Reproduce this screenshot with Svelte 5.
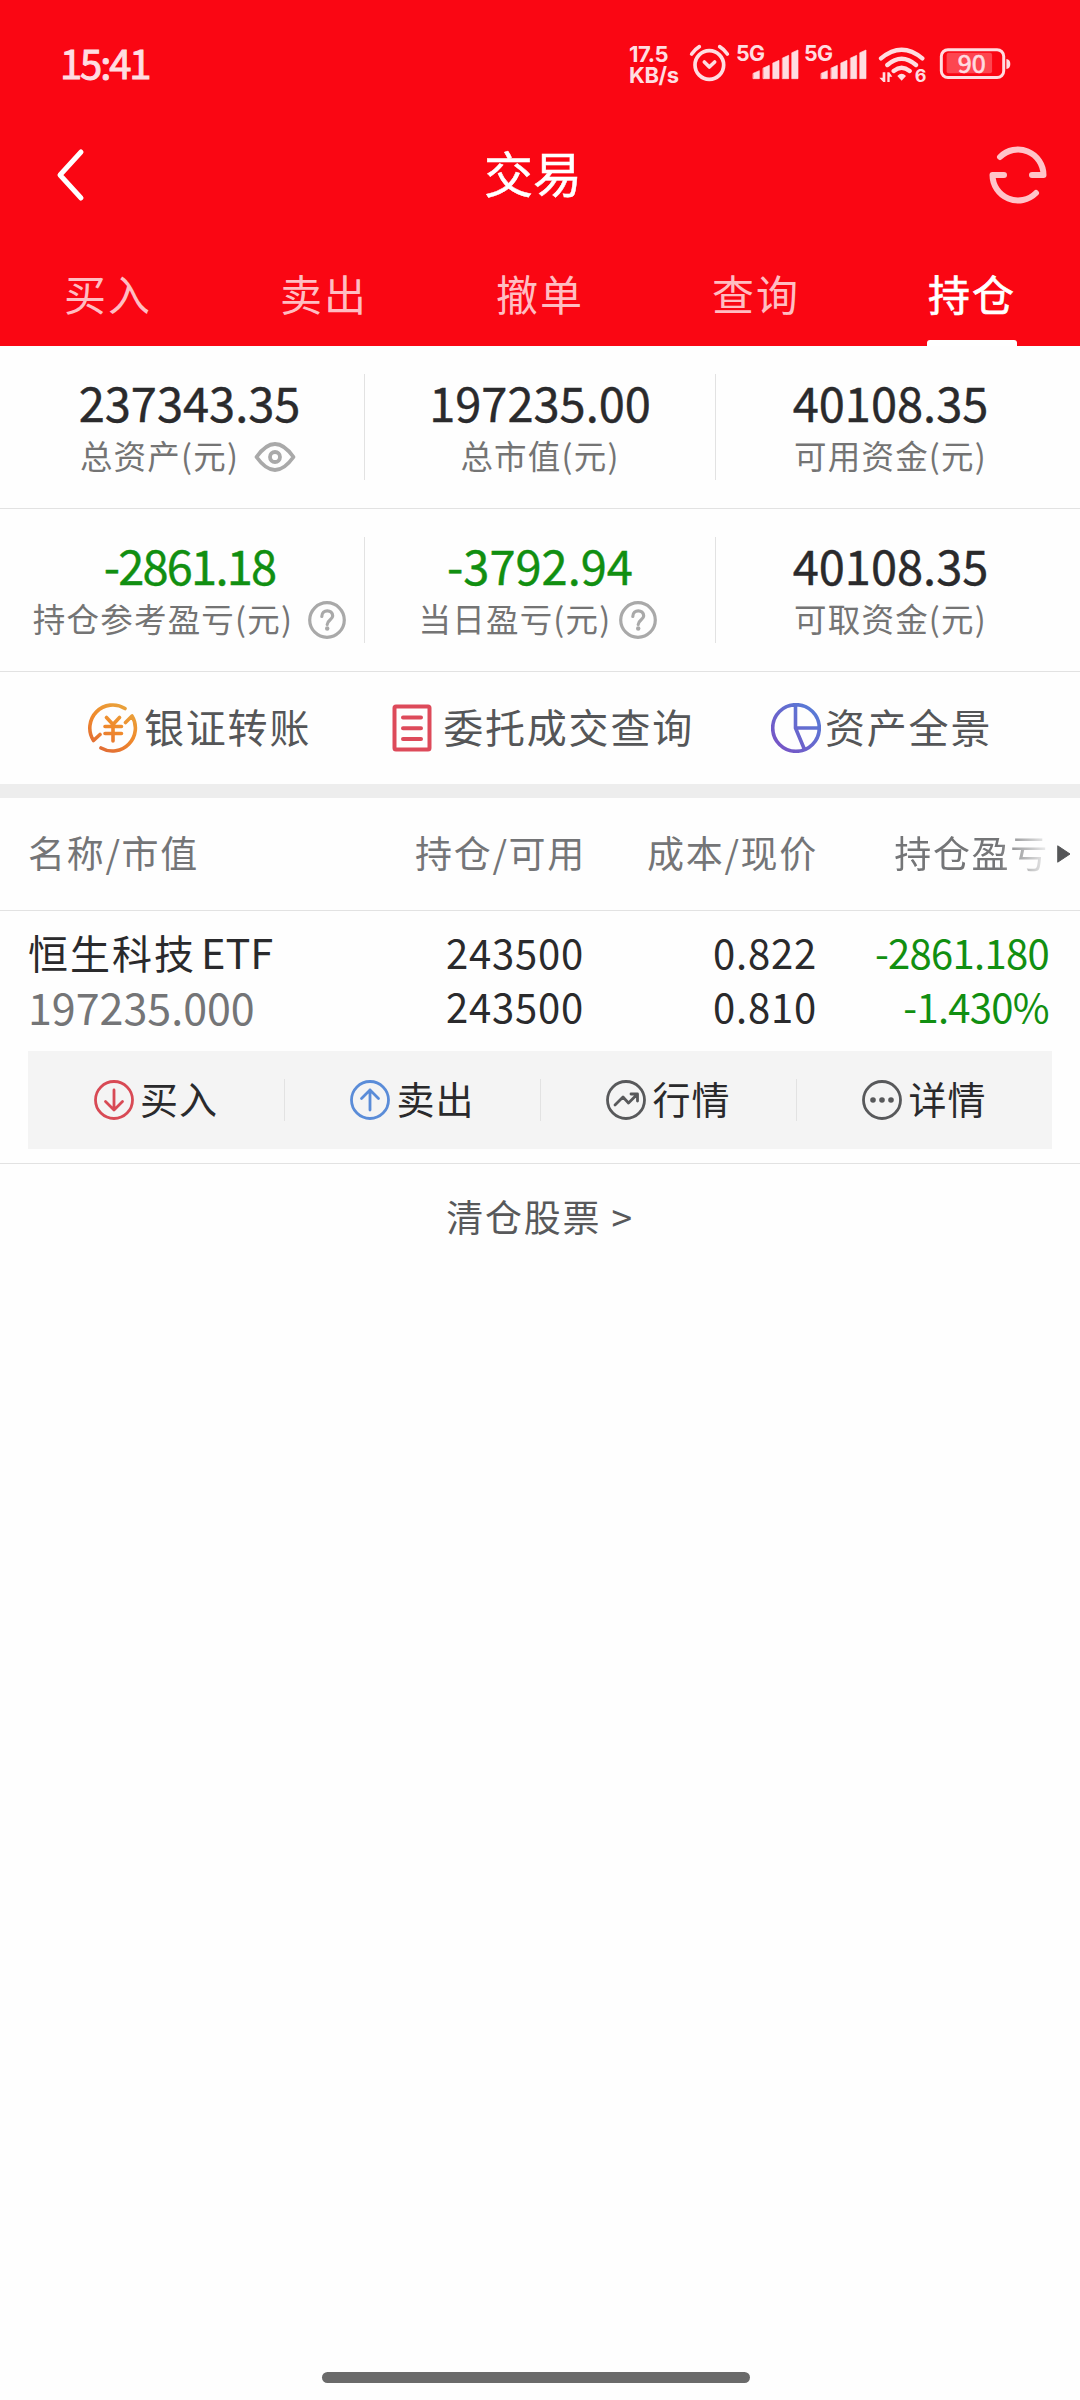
<script lang="ts">
  type Stat = {
    value: string;
    label: string;
    down?: boolean;
    narrow?: boolean;
    icon?: "eye" | "help";
    tight?: boolean;
  };

  const tabs = ["买入", "卖出", "撤单", "查询", "持仓"];
  let activeTab = $state("持仓");

  const stats: Stat[][] = [
    [
      { value: "237343.35", label: "总资产(元)", icon: "eye" },
      { value: "197235.00", label: "总市值(元)" },
      { value: "40108.35", label: "可用资金(元)" },
    ],
    [
      {
        value: "-2861.18",
        label: "持仓参考盈亏(元)",
        down: true,
        narrow: true,
        icon: "help",
      },
      {
        value: "-3792.94",
        label: "当日盈亏(元)",
        down: true,
        icon: "help",
        tight: true,
      },
      { value: "40108.35", label: "可取资金(元)" },
    ],
  ];

  const actions = [
    { id: "buy", label: "买入" },
    { id: "sell", label: "卖出" },
    { id: "quote", label: "行情" },
    { id: "detail", label: "详情" },
  ];

  const bars = [
    [460, 152],
    [490, 136],
    [519, 121],
    [548, 106],
    [576, 90],
  ];
</script>

{#snippet signal()}
  <svg class="signal" viewBox="405 45 195 180">
    <text x="408" y="124" class="net">5G</text>
    {#each bars as [x, y]}
      <path d={`M${x} ${y + 8}L${x + 18} ${y}V176H${x}Z`} />
    {/each}
  </svg>
{/snippet}

<div class="screen">
  <header>
    <div class="status">
      <span class="time">15:41</span>
      <span class="speed"><span>17.5</span><span>KB/s</span></span>
      <svg class="alarm" viewBox="264 45 129 180">
        <circle cx="328" cy="135" r="43" />
        <path d="M275 102Q286 87 298 80M382 102Q371 87 359 80M313 126L328 141L344 126" />
      </svg>
      {@render signal()}
      {@render signal()}
      <svg class="wifi" viewBox="834 45 150 180">
        <path
          class="arc"
          d="M843 115Q905 63 967 115M862 135Q905 98 948 135M881 153Q905 134 929 153"
        />
        <path d="M892 168Q905 155 918 168L905 182Z" />
        <path d="M848 157h8v29h-6l-12-13h10zM862 186v-29h6l9 13h-8v16z" />
        <text x="944" y="187" class="gen">6</text>
      </svg>
      <svg class="battery" viewBox="1017 45 220 180">
        <rect class="shell" x="1024" y="89" width="188" height="84" rx="20" />
        <rect class="fill" x="1040" y="98" width="137" height="62" rx="6" />
        <path d="M1220 117q12 2 12 15t-12 15z" />
        <text x="1116" y="159" class="level">90</text>
      </svg>
    </div>

    <div class="nav">
      <svg class="back" viewBox="0 0 32 60">
        <path d="M25 7L4 30L25 53" />
      </svg>
      <h1>交易</h1>
      <svg class="refresh" viewBox="0 0 60 60">
        <path d="M12 12A25.5 25.5 0 0 1 55.500 30H44M48 48A25.500 25.500 0 0 1 4.500 30H16" />
      </svg>
    </div>

    <nav class="tabs">
      {#each tabs as tab}
        <button
          type="button"
          class:active={tab === activeTab}
          onclick={() => (activeTab = tab)}>{tab}</button
        >
      {/each}
    </nav>
  </header>

  {#each stats as row}
    <section class="stats">
      {#each row as stat}
        <div class="stat">
          <div class="value" class:down={stat.down} class:narrow={stat.narrow}>
            {stat.value}
          </div>
          <div class="label" class:tight={stat.tight}>
            <span>{stat.label}</span>
            {#if stat.icon === "eye"}
              <svg class="eye" viewBox="0 0 42 30">
                <path d="M2.500 15Q21-11 39.500 15Q21 41 2.500 15Z" />
                <circle cx="21" cy="15" r="5" />
              </svg>
            {:else if stat.icon === "help"}
              <svg class="help" viewBox="0 0 38 38">
                <circle cx="19" cy="19" r="17.300" />
                <path d="M13.800 15.500C13.800 8 24.700 8 24.700 15C24.700 18.500 19.200 19 19.200 23.500" />
                <circle class="dot" cx="19.200" cy="27.500" r="2.200" />
              </svg>
            {/if}
          </div>
        </div>
      {/each}
    </section>
  {/each}

  <section class="links">
    <div class="link">
      <svg class="transfer" viewBox="0 0 50 50">
        <defs>
          <linearGradient id="orange" x1="0.800" y1="0" x2="0.200" y2="1">
            <stop offset="0" stop-color="#e8a33c" />
            <stop offset="0.500" stop-color="#f08a2c" />
            <stop offset="1" stop-color="#e06a35" />
          </linearGradient>
        </defs>
        <path
          stroke="url(#orange)"
          d="M37 5.500A23 23 0 0 0 5.500 37.500L12 31.500M13 45A23 23 0 0 0 44 13L37.500 19.500M18.500 14.500L25 21.500L31.500 14.500M25 21.500V38M17 23.500H33.500M17 30.500H33.500"
        />
      </svg>
      <span>银证转账</span>
    </div>
    <div class="link">
      <svg class="orders" viewBox="0 0 40 48">
        <rect x="2.500" y="2.500" width="35" height="43" rx="1.500" />
        <path d="M11 13.500H29M11 24.300H29M11 35H29" />
      </svg>
      <span>委托成交查询</span>
    </div>
    <div class="link">
      <svg class="pie" viewBox="0 0 50 50">
        <defs>
          <linearGradient id="violet" x1="1" y1="0" x2="0" y2="1">
            <stop offset="0" stop-color="#5480d8" />
            <stop offset="1" stop-color="#7a50c4" />
          </linearGradient>
        </defs>
        <path
          stroke="url(#violet)"
          d="M1.700 25a23.300 23.300 0 1 0 46.600 0a23.300 23.300 0 1 0-46.600 0M24.500 2V25H48M24.500 25L33.500 46.500"
        />
      </svg>
      <span>资产全景</span>
    </div>
  </section>

  <section class="holdings">
    <div class="head">
      <span>名称/市值</span>
      <span>持仓/可用</span>
      <span>成本/现价</span>
      <span class="fade">持仓盈亏</span>
      <svg class="more" viewBox="0 0 14 18"><path d="M1 1L13 9L1 17Z" /></svg>
    </div>

    <div class="row">
      <div class="name">
        <span>恒生科技<i>ETF</i></span>
        <span class="market">197235.000</span>
      </div>
      <div><span>243500</span><span>243500</span></div>
      <div><span>0.822</span><span>0.810</span></div>
      <div class="down"><span>-2861.180</span><span>-1.430%</span></div>
    </div>

    <div class="actions">
      {#each actions as action}
        <button type="button">
          <svg class={action.id} viewBox="0 0 40 40">
            <circle cx="20" cy="20" r="18.500" />
            {#if action.id === "buy"}
              <path d="M20 10V30M11.500 21.500L20 30L28.500 21.500" />
            {:else if action.id === "sell"}
              <path d="M20 30V10M11.500 18.500L20 10L28.500 18.500" />
            {:else if action.id === "quote"}
              <path d="M9 25L17 17L22.500 23L31 14.500M25 14H31.500V21" />
            {:else}
              <g class="dots">
                <circle cx="11" cy="20" r="2.800" />
                <circle cx="20" cy="20" r="2.800" />
                <circle cx="29" cy="20" r="2.800" />
              </g>
            {/if}
          </svg>
          <span>{action.label}</span>
        </button>
      {/each}
    </div>
  </section>

  <a class="cleared" href="#cleared">清仓股票 &gt;</a>

  <div class="home"></div>
</div>

<style>
  :global(body) {
    background: #fefefe;
  }

  .screen {
    display: flex;
    flex-direction: column;
    width: 1080px;
    height: 2400px;
    background: #fefefe;
    color: #2a2a2c;
    font-family: "Noto Sans CJK SC", "Noto Sans", sans-serif;
    overflow: hidden;
  }

  svg {
    display: block;
    flex: none;
    fill: none;
    stroke-linecap: round;
    stroke-linejoin: round;
  }

  button {
    margin: 0;
    padding: 0;
    border: none;
    background: none;
    color: inherit;
    font: inherit;
  }

  header {
    height: 346px;
    background: #fa0613;
    color: #fff;
  }

  /* status bar */
  .status {
    display: flex;
    align-items: center;
    box-sizing: border-box;
    height: 130px;
    padding: 0 68px 0 60px;
    color: #ffdde1;
  }

  .status svg {
    height: 60px;
    fill: currentColor;
  }

  .time {
    margin-right: auto;
    font-size: 40px;
    line-height: 60px;
    letter-spacing: -2.1px;
    padding-bottom: 7px;
    -webkit-text-stroke: 1px currentColor;
  }

  .speed {
    display: flex;
    flex-direction: column;
    width: 59px;
    font-family: Inter, sans-serif;
    font-size: 22px;
    font-weight: 700;
    line-height: 21px;
    letter-spacing: -0.4px;
  }

  .status .alarm {
    width: 43px;
    margin-right: 4px;
    fill: none;
    stroke: currentColor;
    stroke-width: 11;
  }

  .signal {
    width: 65px;
    margin-right: 3px;
    stroke: currentColor;
    stroke-width: 2;
  }

  .net,
  .gen {
    font-family: Inter, sans-serif;
    font-size: 64px;
    font-weight: 700;
    letter-spacing: -2px;
    stroke: none;
  }

  .gen {
    font-size: 54px;
  }

  .wifi {
    width: 50px;
    margin: 0 11px 0 7px;
  }

  .arc {
    fill: none;
    stroke: currentColor;
    stroke-width: 13;
  }

  .battery {
    width: 73px;
  }

  .shell {
    fill: none;
    stroke: currentColor;
    stroke-width: 9;
  }

  .battery .fill {
    fill: #fd4650;
  }

  .level {
    font-size: 76px;
    text-anchor: middle;
    stroke: currentColor;
    stroke-width: 2;
  }

  .nav {
    display: flex;
    align-items: center;
    justify-content: space-between;
    height: 90px;
    padding: 0 32px 0 56px;
  }

  .nav svg {
    height: 60px;
  }

  .back {
    width: 32px;
    stroke: #fff;
    stroke-width: 5;
  }

  h1 {
    margin: 0 10px 7px 0;
    font-size: 49px;
    font-weight: 400;
    line-height: 60px;
    -webkit-text-stroke: 0.5px currentColor;
  }

  .refresh {
    width: 60px;
    stroke: #ffc4c9;
    stroke-width: 6;
  }

  .tabs {
    display: grid;
    grid-template-columns: repeat(5, 1fr);
    height: 126px;
  }

  .tabs button {
    display: flex;
    flex-direction: column;
    align-items: center;
    justify-content: space-between;
    padding-top: 48px;
    color: #ffbdc2;
    font-size: 42px;
    line-height: 50px;
    letter-spacing: 2px;
  }

  .tabs .active {
    color: #fff;
    -webkit-text-stroke: 0.7px currentColor;
  }

  .tabs .active::after {
    content: "";
    width: 90px;
    height: 6px;
    border-radius: 3px 3px 0 0;
    background: #fff;
  }

  /* account summary */
  .stats {
    display: grid;
    grid-template-columns: 349px 351px 350px;
    padding: 28px 15px;
    border-bottom: 1px solid #e2e2e2;
  }

  .stat {
    height: 106px;
    text-align: center;
  }

  .stat + .stat {
    border-left: 1px solid #e2e2e2;
  }

  .value {
    padding-top: 1px;
    font-size: 47px;
    line-height: 54px;
    -webkit-text-stroke: 0.4px currentColor;
  }

  .down {
    color: #118f11;
  }

  .value.narrow {
    letter-spacing: -1.8px;
  }

  .label {
    display: flex;
    align-items: center;
    justify-content: center;
    gap: 15px;
    margin-top: 4px;
    color: #747474;
    font-size: 32.5px;
    line-height: 44px;
    letter-spacing: 1.2px;
  }

  .label.tight {
    gap: 8px;
    margin-right: 4px;
  }

  .eye {
    width: 42px;
    height: 30px;
    margin: 3px 3px 0 0;
    stroke: #a9a9a9;
    stroke-width: 3.8;
  }

  .help {
    width: 38px;
    height: 38px;
    margin-top: 3px;
    stroke: #a9a9a9;
    stroke-width: 3.2;
  }

  .help .dot {
    fill: #a9a9a9;
    stroke: none;
  }

  /* shortcuts */
  .links {
    display: flex;
    align-items: center;
    height: 112px;
    padding-left: 88px;
    border-bottom: 14px solid #ededed;
    color: #555658;
    font-size: 40px;
    line-height: 50px;
    letter-spacing: 1.8px;
  }

  .link {
    display: flex;
    align-items: center;
  }

  .link span {
    margin-bottom: 4px;
  }

  .transfer,
  .pie {
    width: 50px;
    height: 50px;
    stroke-width: 3.6;
  }

  .transfer {
    margin-right: 6px;
  }

  .orders {
    width: 40px;
    height: 48px;
    margin: 0 11px 0 81px;
    stroke: #dd4a5a;
    stroke-width: 4;
  }

  .pie {
    margin: 0 4px 0 77px;
  }

  /* holdings table */
  .holdings {
    padding-bottom: 14px;
    border-bottom: 1px solid #e2e2e2;
  }

  .head,
  .row {
    display: grid;
    grid-template-columns: 272px 284px 233px 232px;
    padding-left: 28px;
    text-align: right;
  }

  .head {
    grid-template-columns: 274px 284px 232px 231px 30px;
    align-items: center;
    height: 112px;
    border-bottom: 1px solid #e2e2e2;
    color: #747577;
    font-size: 37px;
    line-height: 108px;
    letter-spacing: 1.7px;
  }

  .head span {
    margin-top: -4px;
  }

  .head span:first-child,
  .name {
    text-align: left;
  }

  .fade {
    mask-image: linear-gradient(90deg, #000 78%, transparent 102%);
  }

  .more {
    width: 14px;
    height: 18px;
    margin-left: 8px;
    fill: #555658;
    stroke: #555658;
    stroke-width: 1;
  }

  .row {
    padding-top: 14px;
    font-size: 40px;
    line-height: 54px;
  }

  .row span {
    display: block;
    letter-spacing: 0.8px;
  }

  .row .down span {
    letter-spacing: -0.7px;
  }

  .row .name span:first-child {
    letter-spacing: 2px;
  }

  .name i {
    margin-left: 5px;
    font-size: 41.5px;
    font-style: normal;
    line-height: 1;
    letter-spacing: 0;
  }

  .row .market {
    color: #747577;
    font-size: 43px;
    letter-spacing: 0;
  }

  .actions {
    display: grid;
    grid-template-columns: repeat(4, 256px);
    align-items: center;
    height: 98px;
    margin: 18px 28px 0;
    background: #f4f4f4;
  }

  .actions button {
    display: flex;
    align-items: center;
    justify-content: center;
    gap: 6px;
    height: 42px;
    font-size: 38px;
    line-height: 42px;
    letter-spacing: 1px;
  }

  .actions button + button {
    border-left: 1px solid #e2e2e2;
  }

  .actions span {
    margin-bottom: 4px;
  }

  .actions svg {
    width: 40px;
    height: 40px;
    stroke: #58595b;
    stroke-width: 2.8;
  }

  .actions .buy {
    stroke: #d84a55;
  }

  .actions .sell {
    stroke: #5a8cd8;
  }

  .actions .dots {
    fill: #58595b;
    stroke: none;
  }

  .cleared {
    margin-top: 27px;
    color: #58595b;
    font-size: 37px;
    line-height: 50px;
    letter-spacing: 1.8px;
    text-align: center;
    text-decoration: none;
  }

  .home {
    width: 428px;
    height: 11px;
    margin: auto 0 17px 322px;
    border-radius: 6px;
    background: #6a6a6a;
  }
</style>
